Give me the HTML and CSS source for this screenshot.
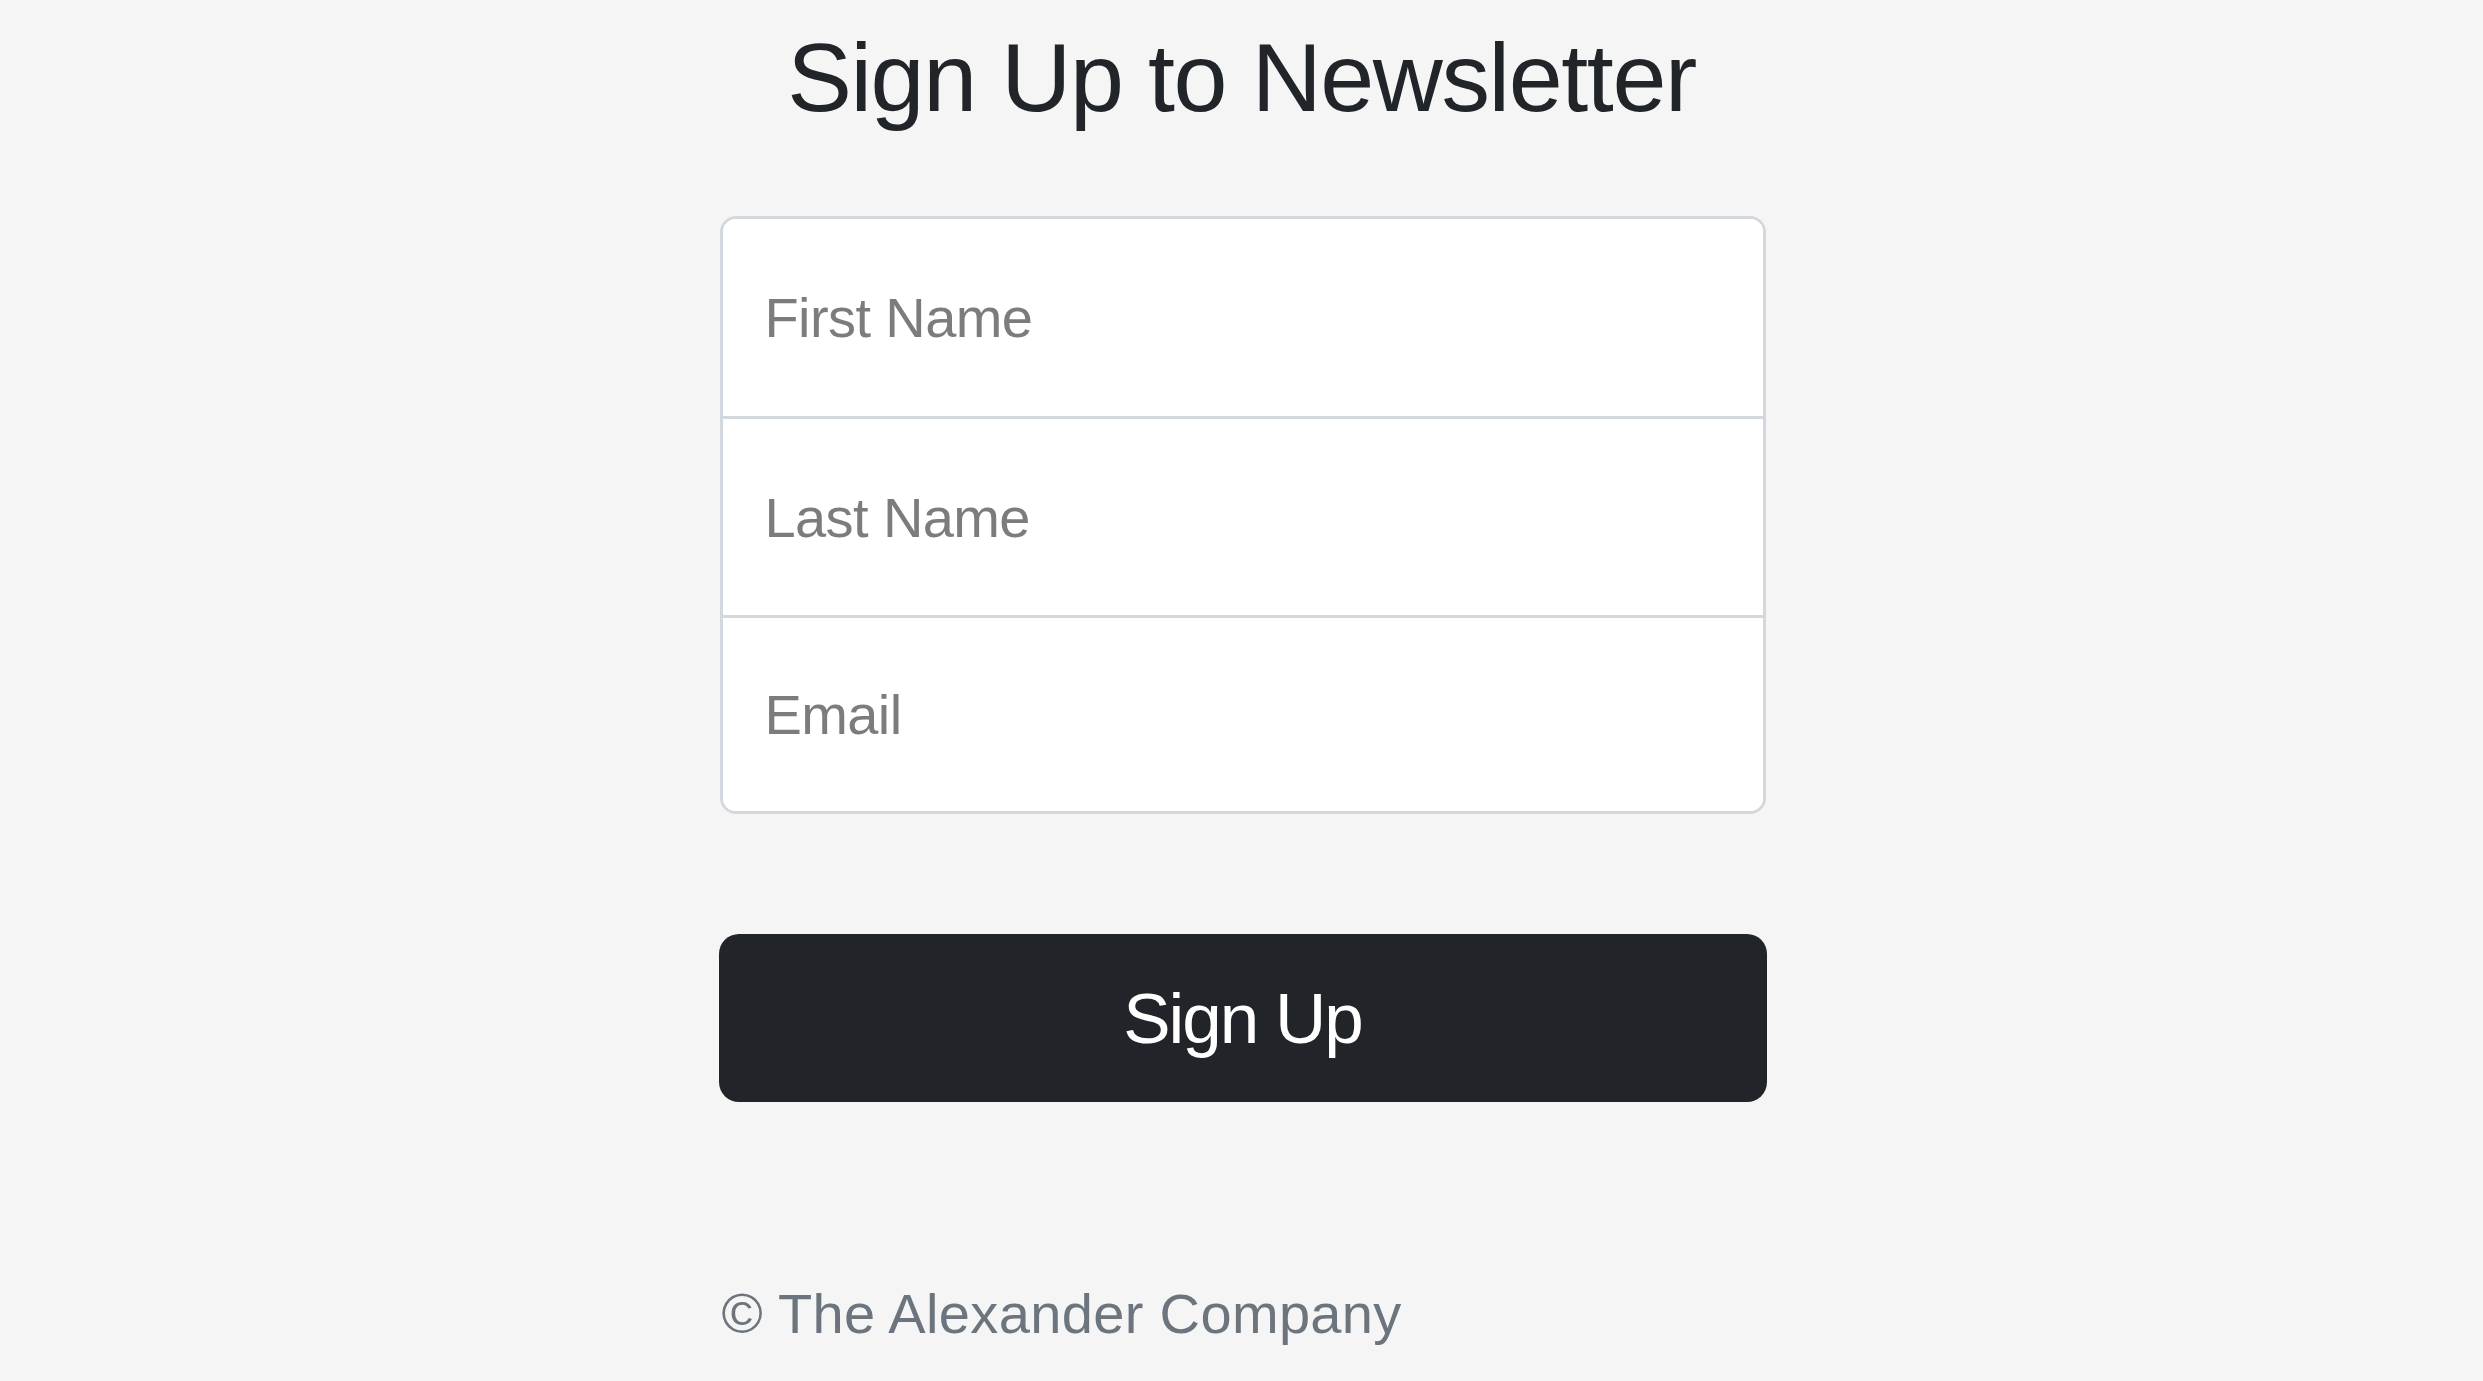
FILE: index.html
```html
<!DOCTYPE html>
<html lang="en">
<head>
<meta charset="utf-8">
<title>Sign Up to Newsletter</title>
<link rel="stylesheet" href="styles.css">
</head>
<body>
<main class="page">
  <h1 class="title">Sign Up to Newsletter</h1>
  <form class="signup">
    <div class="fields">
      <input class="field" type="text" placeholder="First Name">
      <input class="field field-mid" type="text" placeholder="Last Name">
      <input class="field field-last" type="email" placeholder="Email">
    </div>
    <button class="btn" type="button">Sign Up</button>
  </form>
  <p class="footer">© The Alexander Company</p>
</main>
</body>
</html>
```

FILE: styles.css
```css
html, body {
  margin: 0;
  padding: 0;
  background: #f5f5f5;
}
body {
  font-family: "Liberation Sans", Arial, sans-serif;
  color: #212529;
}
.page {
  width: 1046px;
  margin: 0 auto;
  padding-left: 2px;
  display: flex;
  flex-direction: column;
}
.title {
  margin: 20px 0 0 -2px;
  font-size: 97px;
  font-weight: 400;
  line-height: 116px;
  letter-spacing: -1.4px;
  text-align: center;
  color: #212529;
}
.signup {
  margin: 80px 0 0 0;
  display: flex;
  flex-direction: column;
}
.fields {
  display: flex;
  flex-direction: column;
  border: 3px solid #d3d8de;
  border-radius: 16px;
  background: #fff;
  overflow: hidden;
}
.field {
  display: block;
  box-sizing: border-box;
  height: 200px;
  margin: 0;
  padding: 0 0 0 42px;
  border: 0;
  border-bottom: 3px solid #d3d8de;
  background: #fff;
  font-family: "Liberation Sans", Arial, sans-serif;
  font-size: 56px;
  letter-spacing: -0.6px;
  color: #212529;
  outline: none;
}
.field-mid {
  height: 199px;
}
.field-last {
  border-bottom: 0;
  height: 193px;
}
.field::placeholder {
  color: #7c7c7c;
  opacity: 1;
}
.btn {
  margin: 120px 0 0 -1px;
  width: 1048px;
  height: 168px;
  border: 0;
  border-radius: 20px;
  background: #212529;
  color: #fff;
  font-family: "Liberation Sans", Arial, sans-serif;
  font-size: 71px;
  letter-spacing: -2px;
  cursor: pointer;
}
.footer {
  margin: 180px 0 0 2px;
  font-size: 56px;
  line-height: 64px;
  letter-spacing: 0.35px;
  color: #6c757d;
}
```
